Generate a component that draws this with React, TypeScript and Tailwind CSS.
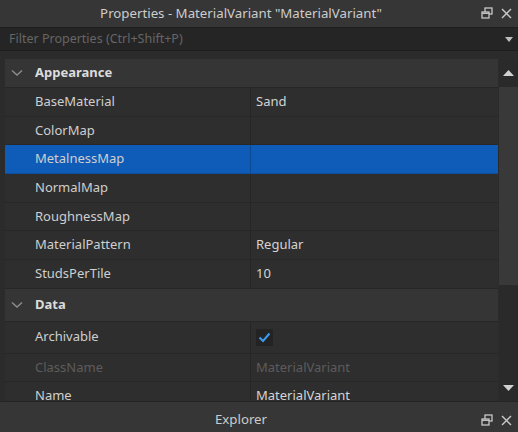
import React from 'react';

type Prop = { name: string; value?: string; check?: boolean; dim?: boolean; selected?: boolean; tall?: boolean };

const appearance: Prop[] = [
    { name: 'BaseMaterial', value: 'Sand' },
    { name: 'ColorMap' },
    { name: 'MetalnessMap', selected: true },
    { name: 'NormalMap' },
    { name: 'RoughnessMap' },
    { name: 'MaterialPattern', value: 'Regular' },
    { name: 'StudsPerTile', value: '10' },
];

const data: Prop[] = [
    { name: 'Archivable', check: true, tall: true },
    { name: 'ClassName', value: 'MaterialVariant', dim: true },
    { name: 'Name', value: 'MaterialVariant' },
];

const RestoreIcon = () => (
    <svg width="12" height="12" viewBox="0 0 12 12" fill="none" stroke="#c8c8c8" strokeWidth="1.3">
        <rect x="4" y="1" width="7" height="6" />
        <rect x="1" y="5" width="7" height="6" fill="#363636" />
        <line x1="1" y1="6.3" x2="8" y2="6.3" />
    </svg>
);

const CloseIcon = () => (
    <svg width="11" height="11" viewBox="0 0 11 11" stroke="#c8c8c8" strokeWidth="1.5">
        <line x1="1" y1="1" x2="10" y2="10" />
        <line x1="10" y1="1" x2="1" y2="10" />
    </svg>
);

const Chevron = () => (
    <svg width="12" height="8" viewBox="0 0 12 8" fill="none" stroke="#8c8c8c" strokeWidth="1.5">
        <polyline points="1,1.5 6,6 11,1.5" />
    </svg>
);

const Check = () => (
    <div className="flex h-[17px] w-[17px] items-center justify-center bg-[#232323]">
        <svg width="13" height="11" viewBox="0 0 13 11" fill="none" stroke="#3b9cf2" strokeWidth="2">
            <polyline points="1.5,5.5 5,9 11.5,1.5" />
        </svg>
    </div>
);

const GroupHeader = ({ title, h }: { title: string; h: string }) => (
    <div className={`flex ${h} shrink-0 items-center border-b border-[#272727] bg-[#353535]`}>
        <div className="flex w-[30px] pl-[6px]">
            <Chevron />
        </div>
        <span className="text-[13px] font-bold text-[#dcdcdc]">{title}</span>
    </div>
);

const Row = ({ p }: { p: Prop }) => (
    <div
        className={`flex shrink-0 border-b ${p.tall ? 'h-[32px]' : 'h-[28.67px]'} ${
            p.selected ? 'border-[#0b4f9e] bg-[#0e5bb8]' : 'border-[#272727] bg-[#2e2e2e]'
        }`}
    >
        <div
            className={`flex w-[246px] items-center border-r pl-[30px] ${
                p.selected ? 'border-[#0b4a93]' : 'border-[#262626]'
            } ${p.dim ? 'text-[#5c5c5c]' : 'text-[#cfcfcf]'}`}
        >
            {p.name}
        </div>
        <div className={`flex flex-1 items-center pl-[5px] ${p.dim ? 'text-[#5c5c5c]' : 'text-[#d4d4d4]'}`}>
            {p.check ? <Check /> : p.value}
        </div>
    </div>
);

export default function App() {
    return (
        <div
            className="flex h-[432px] w-[518px] flex-col overflow-hidden bg-[#2b2b2b] text-[13px]"
            style={{ fontFamily: '"Noto Sans", "Open Sans", sans-serif' }}
        >
            {/* Title bar */}
            <div className="relative flex h-[27px] shrink-0 items-center justify-center bg-[#363636] pr-[36px] text-[13.25px] text-[#cccccc]">
                <span>Properties - MaterialVariant "MaterialVariant"</span>
                <div className="absolute right-[6px] top-[7px] flex items-center gap-[8px]">
                    <RestoreIcon />
                    <CloseIcon />
                </div>
            </div>

            {/* Filter */}
            <div className="flex h-[24px] shrink-0 items-center justify-between border-y border-[#1e1e1e] bg-[#252525] pl-[9px] pr-[5px]">
                <span className="text-[12.5px] text-[#666666]">Filter Properties (Ctrl+Shift+P)</span>
                <svg width="8" height="5" viewBox="0 0 8 5">
                    <polygon points="0,0 8,0 4,5" fill="#bdbdbd" />
                </svg>
            </div>

            {/* Content */}
            <div className="flex flex-1 overflow-hidden pt-[8px]">
                <div className="flex flex-1 flex-col overflow-hidden pl-[5px] pr-[1px]">
                    <GroupHeader title="Appearance" h="h-[29px]" />
                    {appearance.map((p) => (
                        <Row key={p.name} p={p} />
                    ))}
                    <GroupHeader title="Data" h="h-[33px]" />
                    {data.map((p) => (
                        <Row key={p.name} p={p} />
                    ))}
                </div>

                {/* Scrollbar */}
                <div className="flex w-[19px] flex-col bg-[#2a2a2a]">
                    <div className="flex h-[28px] items-center justify-center">
                        <svg width="11" height="6" viewBox="0 0 11 6">
                            <polygon points="0,6 11,6 5.5,0" fill="#d0d0d0" />
                        </svg>
                    </div>
                    <div className="h-[198px] bg-[#393939]" />
                    <div className="flex-1" />
                    <div className="flex h-[26px] items-center justify-center">
                        <svg width="11" height="6" viewBox="0 0 11 6">
                            <polygon points="0,0 11,0 5.5,6" fill="#d0d0d0" />
                        </svg>
                    </div>
                </div>
            </div>

            {/* Explorer */}
            <div className="relative flex h-[31px] shrink-0 items-center justify-center border-t border-[#242424] bg-[#363636] pr-[36px] pt-[5px] text-[13.25px] text-[#cccccc]">
                <span>Explorer</span>
                <div className="absolute right-[6px] top-[12px] flex items-center gap-[8px]">
                    <RestoreIcon />
                    <CloseIcon />
                </div>
            </div>
        </div>
    );
}
